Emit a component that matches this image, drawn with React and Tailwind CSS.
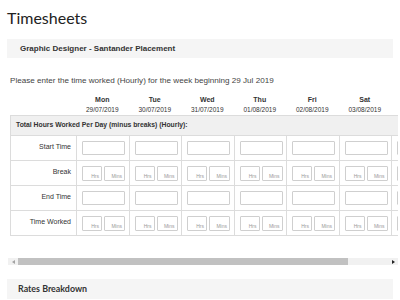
import React from "react";

const days = [
  ["Mon", "29/07/2019"],
  ["Tue", "30/07/2019"],
  ["Wed", "31/07/2019"],
  ["Thu", "01/08/2019"],
  ["Fri", "02/08/2019"],
  ["Sat", "03/08/2019"],
  ["", ""],
];

const rows = [
  { label: "Start Time", split: false },
  { label: "Break", split: true },
  { label: "End Time", split: false },
  { label: "Time Worked", split: true },
];

function SplitInput({ hidden }) {
  return (
    <div className="flex gap-[2px]">
      <div className="w-[20px] h-[15px] border border-[#cfcfcf] rounded-[1px] flex items-end justify-end pr-[2px] pb-[1px] text-[5px] leading-[5px] text-[#9a9a9a]">
        {hidden ? "" : "Hrs"}
      </div>
      <div className="w-[21px] h-[15px] border border-[#cfcfcf] rounded-[1px] flex items-end justify-end pr-[2px] pb-[1px] text-[5px] leading-[5px] text-[#9a9a9a]">
        {hidden ? "" : "Mins"}
      </div>
    </div>
  );
}

export default function App() {
  return (
    <div className="w-[400px] h-[300px] overflow-hidden bg-white text-[#333] font-['Liberation_Sans',Arial,sans-serif]">
      {/* title */}
      <div className="h-[39px] pt-[8px] pl-[7px]">
        <h1 className="font-['Lato',sans-serif] text-[16px] leading-[20px] text-[#222]">
          Timesheets
        </h1>
      </div>

      <div className="mx-[7px] h-[19px] bg-[#f5f5f5] flex items-center pl-[13px]">
        <span className="text-[8px] font-bold text-[#333]">
          Graphic Designer - Santander Placement
        </span>
      </div>

      <p className="mt-[17px] pl-[10px] text-[8.1px] leading-[12px] text-[#444]">
        Please enter the time worked (Hourly) for the week beginning 29 Jul 2019
      </p>

      {/* scrolling table */}
      <div className="mt-[7px] ml-[7px] w-[391px] overflow-hidden">
        <div className="pl-[3px] w-[440px]">
          <div className="flex">
            <div className="w-[66px] shrink-0" />
            {days.map(([d, date], i) => (
              <div key={i} className="w-[52.5px] shrink-0 text-center text-[#333]">
                <div className="h-[11px] leading-[11px] text-[7px] font-bold">{d}</div>
                <div className="h-[10px] leading-[9px] text-[6.5px]">{date}</div>
              </div>
            ))}
          </div>

          <table className="table-fixed border-collapse w-[433.5px]">
            <colgroup>
              <col className="w-[66px]" />
              {days.map((_, i) => (
                <col key={i} className="w-[52.5px]" />
              ))}
            </colgroup>
            <tbody>
              <tr className="h-[20px] bg-[#f0f0f0]">
                <td colSpan={8} className="border border-[#dcdcdc] pl-[5px] text-[6.8px] font-bold text-[#333]">
                  Total Hours Worked Per Day (minus breaks) (Hourly):
                </td>
              </tr>
              {rows.map((r) => (
                <tr key={r.label} className="h-[25px]">
                  <td className="border border-[#dcdcdc] text-right pr-[5px] pb-[1px] text-[7px] text-[#333]">
                    {r.label}
                  </td>
                  {days.map(([d], i) => (
                    <td key={i} className="border border-[#dcdcdc] pl-[5px] align-middle">
                      {r.split ? (
                        <SplitInput hidden={!d} />
                      ) : (
                        <div className="w-[43px] h-[14px] border border-[#cfcfcf] rounded-[1px]" />
                      )}
                    </td>
                  ))}
                </tr>
              ))}
            </tbody>
          </table>
        </div>
      </div>

      {/* fake scrollbar */}
      <div className="mt-[22px] ml-[8px] w-[390px] h-[7px] bg-[#f1f1f1] flex items-center">
        <div className="w-[10px] flex justify-center">
          <div className="w-0 h-0 border-y-[2px] border-y-transparent border-r-[3px] border-r-[#a3a3a3]" />
        </div>
        <div className="w-[330px] h-[7px] bg-[#c1c1c1]" />
        <div className="flex-1" />
        <div className="w-[10px] flex justify-center">
          <div className="w-0 h-0 border-y-[2.5px] border-y-transparent border-l-[3px] border-l-[#222]" />
        </div>
      </div>

      <div className="mt-[14px] mx-[7px] h-[20px] bg-[#f5f5f5] flex items-center pl-[11px]">
        <span className="font-['Lato',sans-serif] text-[8.9px] font-bold text-[#333]">
          Rates Breakdown
        </span>
      </div>
    </div>
  );
}
